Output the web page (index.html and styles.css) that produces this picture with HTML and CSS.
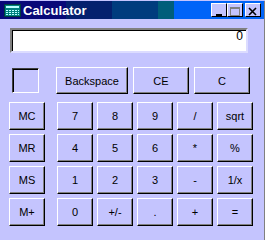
FILE: index.html
```html
<!DOCTYPE html>
<html lang="en">
<head>
    <meta charset="UTF-8">
    <title>Calculator</title>
    <link rel="stylesheet" href="styles.css">
</head>
<body>
    <div class="window">
        <!-- Barre de titre -->
        <div class="titlebar">
            <svg class="app-icon" width="17" height="13" viewBox="0 0 17 13">
                <rect x="0.5" y="0.5" width="16" height="12" fill="#008080" stroke="#003c3c"/>
                <rect x="2" y="2" width="13" height="2" fill="#bff"/>
                <g fill="#bff">
                    <rect x="2" y="6" width="2" height="1"/><rect x="5" y="6" width="2" height="1"/><rect x="8" y="6" width="2" height="1"/><rect x="11" y="6" width="2" height="1"/><rect x="14" y="6" width="1" height="1"/>
                    <rect x="2" y="8" width="2" height="1"/><rect x="5" y="8" width="2" height="1"/><rect x="8" y="8" width="2" height="1"/><rect x="11" y="8" width="2" height="1"/><rect x="14" y="8" width="1" height="1"/>
                    <rect x="2" y="10" width="2" height="1"/><rect x="5" y="10" width="2" height="1"/><rect x="8" y="10" width="2" height="1"/><rect x="11" y="10" width="2" height="1"/><rect x="14" y="10" width="1" height="1"/>
                </g>
            </svg>
            <span class="title">Calculator</span>
            <div class="caption-buttons">
                <div class="cap-btn"><svg width="14" height="12" viewBox="0 0 14 12"><rect x="4" y="8" width="6" height="2" fill="#000"/></svg></div>
                <div class="cap-btn"><svg width="14" height="12" viewBox="0 0 14 12"><rect x="2.5" y="1.5" width="9" height="8" fill="none" stroke="#808080"/><rect x="3" y="2" width="8" height="1" fill="#808080"/></svg></div>
                <div class="cap-btn close"><svg width="14" height="12" viewBox="0 0 14 12"><path d="M3 2 L10 9 M10 2 L3 9" stroke="#000" stroke-width="1.6"/></svg></div>
            </div>
        </div>

        <!-- Contenu -->
        <div class="content">
            <div class="display">0</div>

            <div class="top-row">
                <div class="mem-box"></div>
                <button class="btn wide">Backspace</button>
                <button class="btn mid">CE</button>
                <button class="btn mid">C</button>
            </div>

            <div class="keys">
                <div class="mem-col">
                    <button class="btn">MC</button>
                    <button class="btn">MR</button>
                    <button class="btn">MS</button>
                    <button class="btn">M+</button>
                </div>
                <div class="pad">
                    <button class="btn">7</button>
                    <button class="btn">8</button>
                    <button class="btn">9</button>
                    <button class="btn">/</button>
                    <button class="btn">sqrt</button>
                    <button class="btn">4</button>
                    <button class="btn">5</button>
                    <button class="btn">6</button>
                    <button class="btn">*</button>
                    <button class="btn">%</button>
                    <button class="btn">1</button>
                    <button class="btn">2</button>
                    <button class="btn">3</button>
                    <button class="btn">-</button>
                    <button class="btn">1/x</button>
                    <button class="btn">0</button>
                    <button class="btn">+/-</button>
                    <button class="btn">.</button>
                    <button class="btn">+</button>
                    <button class="btn">=</button>
                </div>
            </div>
        </div>
    </div>
</body>
</html>
```

FILE: styles.css
```css
body {
    margin: 0;
    font-family: "Liberation Sans", Arial, sans-serif;
    background-color: #c4c4fe;
    width: 265px;
    height: 240px;
    overflow: hidden;
}

.window {
    width: 264px;
    height: 240px;
    border-right: 1px solid #808080;
    background-color: #c4c4fe;
}

/* Barre de titre */
.titlebar {
    height: 18px;
    margin-top: 1px;
    display: flex;
    align-items: center;
    background: linear-gradient(to right,
        #080878 0, #080878 66px,
        #04206e 66px, #04206e 112px,
        #003c7e 112px, #003c7e 158px,
        #005e7a 158px, #005e7a 174px,
        #0064f8 174px, #0064f8 100%);
}

.app-icon {
    margin-left: 4px;
    margin-right: 2px;
}

.title {
    color: #fff;
    font-weight: bold;
    font-size: 13px;
}

.caption-buttons {
    margin-left: auto;
    display: flex;
    margin-right: 3px;
}

.cap-btn {
    width: 14px;
    height: 12px;
    background-color: #c4c4fe;
    border: 1px solid;
    border-color: #fff #000 #000 #fff;
}

.cap-btn.close {
    margin-left: 2px;
}

/* Contenu principal */
.content {
    padding-top: 9px;
}

.display {
    margin-left: 10px;
    width: 231px;
    height: 21px;
    background-color: #fff;
    border: 2px solid;
    border-color: #808080 #dcdcff #dcdcff #808080;
    box-shadow: inset 1px 1px #000;
    text-align: right;
    font-size: 12px;
    line-height: 13px;
    padding-right: 3px;
    box-sizing: content-box;
}

.top-row {
    display: flex;
    align-items: flex-start;
    margin-top: 14px;
}

.mem-box {
    margin-left: 12px;
    margin-top: 1px;
    width: 25px;
    height: 23px;
    border: 1px solid;
    border-color: #404040 #fff #fff #404040;
    box-shadow: inset 1px 1px #000;
}

.btn {
    font-family: "Liberation Sans", Arial, sans-serif;
    font-size: 11px;
    color: #000;
    background-color: #c4c4fe;
    border: 1px solid;
    border-color: #fff #000 #000 #fff;
    box-shadow: inset -1px -1px #808080;
    width: 36px;
    height: 28px;
    padding: 0;
    margin: 0;
}

.top-row .btn {
    height: 27px;
}

.btn.wide {
    margin-left: 17px;
    width: 72px;
}

.btn.mid {
    margin-left: 5px;
    width: 56px;
}

.keys {
    display: flex;
    margin-top: 8px;
    margin-left: 9px;
}

.mem-col {
    display: flex;
    flex-direction: column;
    gap: 4px;
}

.pad {
    margin-left: 12px;
    display: grid;
    grid-template-columns: repeat(5, 36px);
    grid-auto-rows: 28px;
    gap: 4px;
}
```
